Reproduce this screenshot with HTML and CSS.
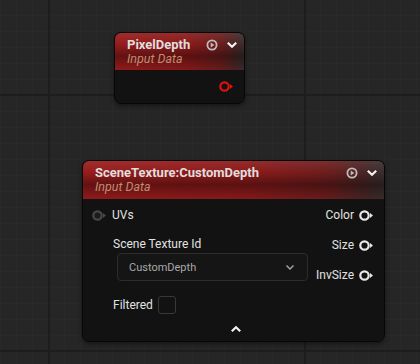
FILE: index.html
```html
<!DOCTYPE html>
<html>
<head>
  <title>Material Graph</title>
  <link rel="stylesheet" href="styles.css">
</head>
<body>
  <div class="graph">

    <div class="node node-pixel">
      <div class="node-head">
        <div class="head-text">
          <div class="title">PixelDepth</div>
          <div class="subtitle">Input Data</div>
        </div>
        <div class="head-icons">
          <svg class="icon-play" width="12" height="12" viewBox="0 0 12 12"><circle cx="6" cy="6" r="4.6" fill="none" stroke="#bdbdbd" stroke-width="1.8"/><path d="M4.7 3.6 L8.3 6 L4.7 8.4 Z" fill="#bdbdbd"/></svg>
          <svg class="icon-chev" width="12" height="8" viewBox="0 0 12 8"><path d="M1.8 1.8 L6 5.8 L10.2 1.8" fill="none" stroke="#f2f2f2" stroke-width="2.2"/></svg>
        </div>
      </div>
      <div class="node-body body-pixel">
        <svg class="pin" width="15" height="11" viewBox="0 0 15 11"><circle cx="5.5" cy="5.5" r="4.2" fill="none" stroke="#e01010" stroke-width="2.2"/><path d="M11 3 L14 5.5 L11 8 Z" fill="#e01010"/></svg>
      </div>
    </div>

    <div class="node node-scene">
      <div class="node-head">
        <div class="head-text">
          <div class="title">SceneTexture:CustomDepth</div>
          <div class="subtitle">Input Data</div>
        </div>
        <div class="head-icons">
          <svg class="icon-play" width="12" height="12" viewBox="0 0 12 12"><circle cx="6" cy="6" r="4.6" fill="none" stroke="#bdbdbd" stroke-width="1.8"/><path d="M4.7 3.6 L8.3 6 L4.7 8.4 Z" fill="#bdbdbd"/></svg>
          <svg class="icon-chev" width="12" height="8" viewBox="0 0 12 8"><path d="M1.8 1.8 L6 5.8 L10.2 1.8" fill="none" stroke="#f2f2f2" stroke-width="2.2"/></svg>
        </div>
      </div>
      <div class="node-body body-scene">
        <div class="pins">
          <div class="inputs">
            <div class="pin-row">
              <svg class="pin" width="15" height="11" viewBox="0 0 15 11"><circle cx="5.5" cy="5.5" r="4.2" fill="#1b1b1b" stroke="#474747" stroke-width="2.2"/><path d="M11 3 L14 5.5 L11 8 Z" fill="#474747"/></svg>
              <span>UVs</span>
            </div>
            <div class="field-label">Scene Texture Id</div>
            <div class="dropdown">
              <span>CustomDepth</span>
              <svg width="10" height="7" viewBox="0 0 10 7"><path d="M1.5 1.5 L5 5 L8.5 1.5" fill="none" stroke="#a8a8a8" stroke-width="1.4"/></svg>
            </div>
            <div class="check-row">
              <span>Filtered</span>
              <div class="checkbox"></div>
            </div>
          </div>
          <div class="outputs">
            <div class="pin-row">
              <span>Color</span>
              <svg class="pin" width="15" height="11" viewBox="0 0 15 11"><circle cx="5.5" cy="5.5" r="4.2" fill="none" stroke="#e8e8e8" stroke-width="2.2"/><path d="M11 3 L14 5.5 L11 8 Z" fill="#e8e8e8"/></svg>
            </div>
            <div class="pin-row">
              <span>Size</span>
              <svg class="pin" width="15" height="11" viewBox="0 0 15 11"><circle cx="5.5" cy="5.5" r="4.2" fill="none" stroke="#e8e8e8" stroke-width="2.2"/><path d="M11 3 L14 5.5 L11 8 Z" fill="#e8e8e8"/></svg>
            </div>
            <div class="pin-row">
              <span>InvSize</span>
              <svg class="pin" width="15" height="11" viewBox="0 0 15 11"><circle cx="5.5" cy="5.5" r="4.2" fill="none" stroke="#e8e8e8" stroke-width="2.2"/><path d="M11 3 L14 5.5 L11 8 Z" fill="#e8e8e8"/></svg>
            </div>
          </div>
        </div>
        <div class="node-foot">
          <svg width="12" height="8" viewBox="0 0 12 8"><path d="M1.8 6.2 L6 2.2 L10.2 6.2" fill="none" stroke="#f2f2f2" stroke-width="2.2"/></svg>
        </div>
      </div>
    </div>

  </div>
</body>
</html>
```

FILE: styles.css
```css
body {
  margin: 0;
  font-family: Roboto, 'Noto Sans', sans-serif;
  background: #262626;
  overflow: hidden;
}

.graph {
  position: relative;
  width: 420px;
  height: 364px;
  background-color: #262626;
  background-image:
    linear-gradient(90deg, transparent 48px, #1d1d1d 48px, #1d1d1d 50px, transparent 50px),
    linear-gradient(180deg, transparent 94px, #1d1d1d 94px, #1d1d1d 96px, transparent 96px),
    linear-gradient(90deg, #292929 1px, transparent 1px),
    linear-gradient(180deg, #292929 1px, transparent 1px);
  background-size: 256px 256px, 256px 256px, 16px 16px, 16px 16px;
  background-position: 0 0, 0 0, 0 0, 0 15px;
}

/* nodes sit on a free canvas */
.node {
  position: absolute;
  display: flex;
  flex-direction: column;
  box-sizing: border-box;
  border: 1px solid #070707;
  border-radius: 7px;
  overflow: hidden;
  background: rgba(17, 18, 17, 0.96);
  box-shadow: 0 2px 5px rgba(0, 0, 0, 0.45);
}

.node-pixel {
  left: 114px;
  top: 32px;
  width: 131px;
  height: 72px;
}

.node-scene {
  left: 82px;
  top: 160px;
  width: 303px;
  height: 182px;
}

.node-head {
  display: flex;
  justify-content: space-between;
  align-items: flex-start;
  box-sizing: border-box;
  height: 37px;
  padding: 4px 6px 0 12px;
  background:
    linear-gradient(180deg, rgba(255, 255, 255, 0.08) 0%, rgba(0, 0, 0, 0) 30%, rgba(0, 0, 0, 0.35) 62%, rgba(0, 0, 0, 0.05) 100%),
    linear-gradient(90deg, #981c1c 0%, #8c1a1a 55%, #6c1d1d 82%, #452727 95%, #3a2e2e 100%);
}

.node-scene .node-head {
  height: 38px;
}

.title {
  font-size: 13px;
  font-weight: bold;
  line-height: 15px;
  color: #dedede;
  white-space: nowrap;
}

.subtitle {
  font-size: 12.5px;
  font-style: italic;
  line-height: 14px;
  color: #c08c74;
}

.head-icons {
  display: flex;
  align-items: center;
  gap: 8px;
  margin-top: 2px;
}

.node-body {
  flex: 1;
}

.body-pixel {
  display: flex;
  align-items: center;
  justify-content: flex-end;
  padding-right: 10px;
}

.body-scene {
  display: flex;
  flex-direction: column;
  padding: 6px 10px 0 9px;
  color: #e2e2e2;
  font-size: 12px;
}

.pins {
  display: flex;
  justify-content: space-between;
}

.pin-row {
  display: flex;
  align-items: center;
  gap: 5px;
  height: 20px;
}

.outputs {
  display: flex;
  flex-direction: column;
  align-items: flex-end;
  gap: 10px;
}

.field-label {
  margin: 12px 0 0 21px;
  line-height: 14px;
}

.dropdown {
  display: flex;
  justify-content: space-between;
  align-items: center;
  box-sizing: border-box;
  width: 191px;
  height: 28px;
  margin: 2px 0 0 25px;
  padding: 0 12px 0 11px;
  border: 1px solid #2c2c2c;
  border-radius: 4px;
  background: #151515;
  color: #a9a9a9;
  font-size: 11px;
}

.check-row {
  display: flex;
  align-items: center;
  gap: 5px;
  height: 20px;
  margin: 14px 0 0 21px;
}

.checkbox {
  width: 16px;
  height: 16px;
  border: 1px solid #383838;
  border-radius: 3px;
  background: #121212;
}

.node-foot {
  display: flex;
  justify-content: center;
  margin-top: 10px;
  padding-left: 6px;
}
```
